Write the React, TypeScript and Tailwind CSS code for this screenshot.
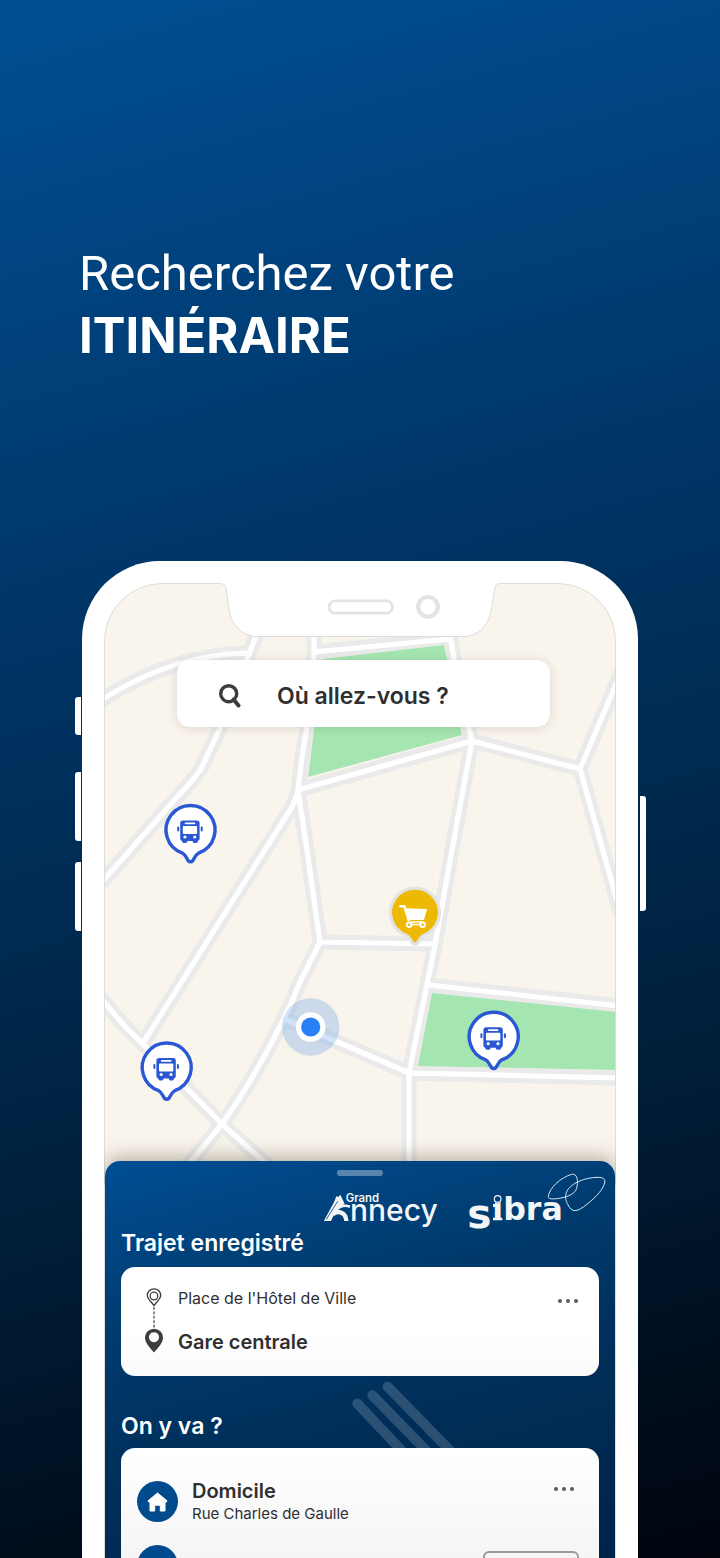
import React from "react";

const ROADS = [
  "M100 701 C140 675 190 653 251 653",
  "M259 628 L248 657 L222 724 L207 756 Q203 767 195 777 L100 884",
  "M314 630 L314 655 L307 727 L302 757 L298 790 Q296 800 290 810 L143 1043",
  "M298 790 L307 850 L320 942 L434 944",
  "M314 652 L450 639",
  "M449 630 L454 658 L472 742",
  "M298 790 L472 741 L580 769 L622 670",
  "M580 769 L607 865 L620 912",
  "M472 741 L452 850 L435 945 L409 1073 L409 1190",
  "M428 985 L620 1006",
  "M409 1073 L620 1078",
  "M284 1019 L340 1043 L409 1073",
  "M320 942 L300 982 Q290 1008 278 1030 Q252 1082 222 1124 L180 1175",
  "M98 994 Q118 1021 143 1044 L222 1124 L275 1172",
];

const PIN =
  "M-8 23.2 A24.5 24.5 0 1 1 8 23.2 C5 24.6 4 28 2.5 30.5 Q0 33 -2.5 30.5 C-4 28 -5 24.6 -8 23.2Z";

function BusPin({ x, y }: { x: number; y: number }) {
  return (
    <g transform={`translate(${x} ${y})`}>
      <path d={PIN} fill="#fff" stroke="#2a57d3" strokeWidth="3.4" strokeLinejoin="round" />
      <g fill="#2a57d3">
        <rect x="-10.3" y="-9.5" width="19.4" height="20.6" rx="2.8" />
        <rect x="-8.3" y="9" width="5" height="4" rx="1.4" />
        <rect x="2.2" y="9" width="5" height="4" rx="1.4" />
        <rect x="-13.3" y="-3.4" width="2" height="5" rx="1" />
        <rect x="10.2" y="-3.4" width="2" height="5" rx="1" />
      </g>
      <g fill="#fff">
        <rect x="-5.8" y="-7.4" width="10.6" height="1.6" rx="0.8" />
        <rect x="-7.7" y="-3.9" width="14.3" height="7.8" rx="1" />
        <circle cx="-5.5" cy="7" r="1.6" />
        <circle cx="4.3" cy="7" r="1.6" />
      </g>
    </g>
  );
}

function CityMap() {
  return (
    <svg
      viewBox="104 583 512 602"
      preserveAspectRatio="xMidYMin slice"
      className="absolute inset-0 h-full w-full"
      role="img"
      aria-label="Plan du réseau"
    >
      <rect x="104" y="583" width="512" height="602" fill="#f9f4ec" />
      <g fill="none" stroke="#eaeaea" strokeWidth="15" strokeLinejoin="round">
        {ROADS.map((d) => (
          <path key={d} d={d} />
        ))}
      </g>
      <path d="M323 659 L444 645 L462 735 L308 777Z" fill="#a4e5b1" />
      <path d="M432 993 L616 1012 V1070 L418 1066Z" fill="#a4e5b1" />
      <g fill="none" stroke="#fff" strokeWidth="5.2" strokeLinejoin="round">
        {ROADS.map((d) => (
          <path key={d} d={d} />
        ))}
      </g>

      <BusPin x={190.5} y={830} />
      <BusPin x={166.7} y={1067.5} />
      <BusPin x={493.7} y={1036.7} />

      <g transform="translate(415 912.5)">
        <path d={PIN} fill="#eeb902" stroke="#e3e3e3" strokeWidth="3.2" strokeLinejoin="round" />
        <g fill="none" stroke="#fff">
          <path d="M-15.6 -6.3 H-10.6 L-6.2 8.4" strokeWidth="2.4" strokeLinejoin="round" />
          <circle cx="-5.8" cy="12.2" r="2.3" strokeWidth="2" />
          <circle cx="7.6" cy="12.2" r="2.3" strokeWidth="2" />
          <path d="M-3.5 12 H5.5 M-6 9.6 L8.4 9.4" strokeWidth="1.5" />
        </g>
        <path d="M-9.6 -4.2 L12 -3.6 L9 7.6 H-6Z" fill="#fff" />
      </g>

      <circle cx="310.7" cy="1027" r="28.7" fill="#3d86e8" fillOpacity="0.24" />
      <circle cx="310.7" cy="1027" r="14.8" fill="#fff" />
      <circle cx="310.7" cy="1027" r="9.6" fill="#2a80f6" />

      <path
        d="M214 575 V583.5 H219 C225 583.5 226 586 226.300 590 L229 609 C231 625 242 636.500 258 636.500 H463 C479 636.500 489 625 491.500 609 L494.500 590 C495 586 496 583.500 501 583.500 H506 V575Z"
        fill="#fff"
      />
      <path
        d="M104.500 1190 V641 A57.500 57.500 0 0 1 162 583.500 H219 C225 583.500 226 586 226.300 590 L229 609 C231 625 242 636.500 258 636.500 H463 C479 636.500 489 625 491.500 609 L494.500 590 C495 586 496 583.500 501 583.500 H558 A57.500 57.500 0 0 1 615.500 641 V1190"
        fill="none"
        stroke="#dcdcda"
      />
      <rect x="329" y="600.800" width="63.500" height="12.400" rx="6.200" fill="#fff" stroke="#e3e3e3" strokeWidth="2.800" />
      <circle cx="428" cy="606.800" r="9.800" fill="#fff" stroke="#e3e3e3" strokeWidth="4.200" />
    </svg>
  );
}

function AnnecyLogo() {
  return (
    <svg viewBox="69 117 351 111" className="h-[37px] w-[117px] overflow-visible" role="img" aria-label="Grand Annecy">
      <path
        d="M72 204 C86 176 101 154 109 130 L115 132 L121 125 L134 152 C118 160 104 178 93 204Z"
        fill="#f3f5f7"
      />
      <path d="M79 199 L113 145" stroke="#00427f" strokeWidth="2.500" />
      <g fill="none" stroke="#f3f5f7">
        <path d="M98 184 C114 170 138 178 139 204" strokeWidth="13" />
        <path d="M108 171 C120 159 134 155 150 161" strokeWidth="8" />
      </g>
      <text x="150" y="203" fill="#f3f5f7" fontSize="90" className="font-['Inter',sans-serif] font-medium">
        nnecy
      </text>
      <text x="137" y="148" fill="#f3f5f7" fontSize="34" className="font-['Inter',sans-serif] font-semibold">
        Grand
      </text>
    </svg>
  );
}

function SibraLogo() {
  return (
    <svg viewBox="501 54 420 168" className="h-[56px] w-[140px] overflow-visible" role="img" aria-label="Sibra">
      <text x="502" y="220" fill="#f3f5f7" fontSize="122" className="font-['DejaVu_Sans',sans-serif] font-bold">
        s
      </text>
      <text x="577" y="196" fill="#f3f5f7" fontSize="95" className="font-['DejaVu_Sans',sans-serif] font-bold">
        ibra
      </text>
      <path d="M579 147 H590 V156 H579Z M579 188 H607 V196 H579Z" fill="#f3f5f7" />
      <circle cx="593" cy="131" r="14" fill="#00417d" />
      <circle cx="593" cy="132" r="10" fill="none" stroke="#f3f5f7" strokeWidth="3.500" />
      <g fill="none" stroke="#d5e6f3" strokeWidth="3">
        <path d="M745 124 C748 100 780 68 815 58 C833 54 835 80 830 100 C824 120 795 128 770 131 C752 133 744 131 745 124Z" />
        <path d="M797 127 C795 100 825 79 865 70 C900 64 918 66 914 84 C906 110 880 134 850 156 C826 173 814 168 806 153 C800 142 797 136 797 127Z" />
      </g>
    </svg>
  );
}

function MoreButton({ label }: { label: string }) {
  return (
    <button type="button" aria-label={label} className="flex h-5 items-center gap-1">
      <span className="size-1 rounded-full bg-[#5b5b5b]" />
      <span className="size-1 rounded-full bg-[#5b5b5b]" />
      <span className="size-1 rounded-full bg-[#5b5b5b]" />
    </button>
  );
}

function TripIcon() {
  return (
    <svg viewBox="0 0 20 66" className="h-[66px] w-5 shrink-0" aria-hidden="true">
      <path
        d="M10 18.500 C6 13.500 3.300 11.500 3.300 8.500 A6.700 6.700 0 0 1 16.700 8.500 C16.700 11.500 14 13.500 10 18.500Z"
        fill="none"
        stroke="#3d3d3d"
        strokeWidth="1.300"
      />
      <circle cx="10" cy="9" r="3.800" fill="none" stroke="#3d3d3d" strokeWidth="1.300" />
      <path d="M10 20 V41" stroke="#3d3d3d" strokeWidth="1.200" strokeDasharray="2.800 1.600" />
      <path
        fillRule="evenodd"
        fill="#3d3d3d"
        d="M10 65.500 C4.500 59.500 1 55 1 50.500 A9 8.800 0 0 1 19 50.500 C19 55 15.500 59.500 10 65.500Z M10 45.200 a5 5 0 1 0 0.010 0Z"
      />
    </svg>
  );
}

function HomeIcon() {
  return (
    <svg viewBox="0 0 21 20" className="h-5 w-[21px]" aria-hidden="true">
      <path
        fill="#fff"
        stroke="#fff"
        strokeWidth="1"
        strokeLinejoin="round"
        d="M10.500 1 L20 8.800 L19.300 10 H18 V19 H13.300 V13.200 H7.700 V19 H3 V10 H1.700 L1 8.800Z"
      />
    </svg>
  );
}

export default function App() {
  return (
    <main className="flex h-screen flex-col overflow-hidden bg-[linear-gradient(165deg,#004f94_0%,#003464_38%,#002342_65%,#000d1c_90%,#00050e_100%)] px-[79px] pt-[243px] font-['Inter','Liberation_Sans',sans-serif] text-white">
      <h1 className="text-[49px] leading-[62px]">
        <span className="block font-['Roboto',sans-serif] font-normal">Recherchez votre</span>
        <strong className="block font-bold">ITINÉRAIRE</strong>
      </h1>

      <div className="relative mx-auto mt-[194px] w-full max-w-[556px] grow rounded-t-[78px] bg-white px-[22px] pt-[22px]">
        <span className="absolute top-[136px] -left-[7px] h-[38px] w-[6px] rounded-l-[3px] bg-white" />
        <span className="absolute top-[211px] -left-[7px] h-[69px] w-[6px] rounded-l-[3px] bg-white" />
        <span className="absolute top-[301px] -left-[7px] h-[69px] w-[6px] rounded-l-[3px] bg-white" />
        <span className="absolute top-[235px] -right-[8px] h-[115px] w-[6px] rounded-r-[3px] bg-white" />

        <div className="overflow-hidden rounded-t-[58px]">
          <section className="relative h-[602px] px-[73px] pt-[77px]">
            <CityMap />
            <form className="relative mr-[-7px] flex h-[67px] items-center gap-9 rounded-[13px] bg-white px-[42px] pt-[5px] shadow-[0_1px_10px_rgba(90,70,40,0.18)]">
              <svg viewBox="0 0 22 24" className="h-6 w-[22px] shrink-0" aria-hidden="true">
                <circle cx="9.700" cy="9.700" r="8" fill="none" stroke="#3d3d3d" strokeWidth="3.400" />
                <path d="M14.500 15.500 L19.500 21.500" stroke="#3d3d3d" strokeWidth="4" strokeLinecap="round" />
              </svg>
              <input
                type="search"
                aria-label="Où allez-vous ?"
                placeholder="Où allez-vous ?"
                className="w-full min-w-0 bg-transparent text-[23px] font-semibold text-[#2f2f2f] outline-none placeholder:text-[#2f2f2f] placeholder:opacity-100"
              />
            </form>
          </section>

          <section className="relative -mt-6 mr-px ml-px rounded-t-[15px] bg-[linear-gradient(165deg,#004e94_0%,#003a6c_32%,#002e58_58%,#002044_100%)] px-4 pt-[9px] shadow-[0_-4px_18px_rgba(60,50,30,0.35)]">
            <span className="mx-auto block h-[6px] w-[46px] rounded-full bg-white/35" />
            <div className="-mt-[3px] -mr-2 flex items-end justify-end gap-[27px]">
              <AnnecyLogo />
              <SibraLogo />
            </div>

            <h2 className="text-[23px] leading-7 font-semibold">Trajet enregistré</h2>
            <article className="mt-[10px] flex h-[109px] rounded-[14px] bg-linear-to-b from-white from-60% to-[#fbfbfb] pt-5 pr-[21px] pl-[23px] text-[#2f2f2f]">
              <TripIcon />
              <div className="ml-[14px] grow">
                <p className="text-[16px] leading-[22px]">Place de l'Hôtel de Ville</p>
                <p className="mt-[21px] text-[20px] leading-6 font-semibold">Gare centrale</p>
              </div>
              <div className="pt-1">
                <MoreButton label="Options du trajet" />
              </div>
            </article>

            <div className="relative flex h-[72px] items-end overflow-hidden pb-2">
              <svg viewBox="0 0 130 72" className="absolute inset-y-0 left-[220px] h-[72px] w-[130px]" aria-hidden="true">
                <g stroke="#fff" strokeOpacity="0.17" strokeWidth="10" strokeLinecap="round">
                  <path d="M16.300 27.500 L96 112" />
                  <path d="M31.300 19.300 L116 106" />
                  <path d="M46.700 10.700 L132 98" />
                </g>
              </svg>
              <h2 className="relative text-[23px] leading-7 font-semibold">On y va ?</h2>
            </div>

            <ul className="min-h-[160px] space-y-6 rounded-t-[14px] bg-linear-to-b from-white to-[#f1f1f1] pt-[31px] pr-5 pl-4 text-[#2f2f2f]">
              <li className="flex items-start">
                <span className="mt-[2px] flex size-[41px] items-center justify-center rounded-full bg-[#004b8d]">
                  <HomeIcon />
                </span>
                <div className="ml-[14px] grow">
                  <p className="text-[20px] leading-6 font-semibold">Domicile</p>
                  <p className="text-[15px] leading-[22px]">Rue Charles de Gaulle</p>
                </div>
                <div className="mr-[5px]">
                  <MoreButton label="Options du domicile" />
                </div>
              </li>
              <li className="flex items-start justify-between">
                <span className="-mt-1 size-[41px] rounded-full bg-[#004b8d]" />
                <button
                  type="button"
                  aria-label="Ajouter une adresse"
                  className="mt-[2px] h-9 w-24 rounded-md border-2 border-[#9a9a9a]"
                />
              </li>
            </ul>
          </section>
        </div>
      </div>
    </main>
  );
}
